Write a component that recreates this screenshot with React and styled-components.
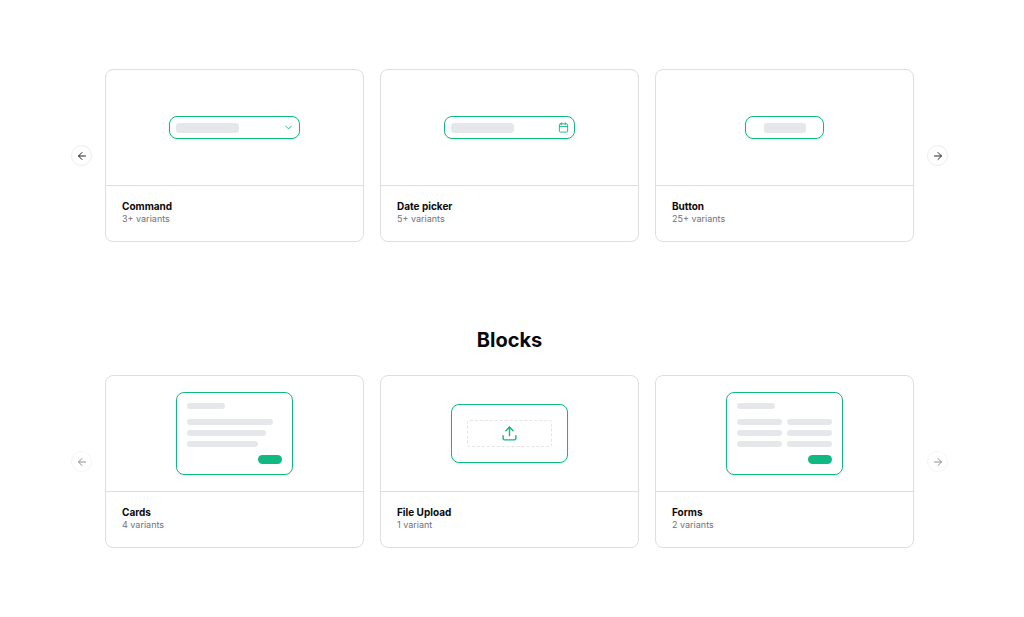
import styled, { createGlobalStyle } from 'styled-components'
import { ArrowLeft, ArrowRight, Calendar, ChevronDown, Upload } from 'lucide-react'

const GlobalStyle = createGlobalStyle`
    * {
        box-sizing: border-box;
    }
    body {
        margin: 0;
        background-color: #fff;
        color: #09090b;
        font-family: Inter, "Liberation Sans", sans-serif;
    }
    h2, h3, p {
        margin: 0;
    }
  `

const Page = styled.main`
    display: flex;
    flex-direction: column;
    gap: 84px;
    padding: 69px 76px 69px 71px;
  `
const Section = styled.section`
    display: flex;
    flex-direction: column;
    gap: 21px;
  `
const SectionTitle = styled.h2`
    font-size: 20px;
    line-height: 28px;
    font-weight: 700;
    text-align: center;
  `
const Carousel = styled.div`
    display: flex;
    align-items: center;
    gap: 13px;
  `
const ArrowButton = styled.button`
    display: flex;
    align-items: center;
    justify-content: center;
    flex: none;
    width: 21px;
    height: 21px;
    padding: 0;
    border: 1px solid #ececee;
    border-radius: 50%;
    background-color: #fff;
    color: #27272a;

    &:disabled {
        opacity: 0.5;
    }
  `
const CardList = styled.div`
    display: grid;
    grid-template-columns: repeat(3, 1fr);
    gap: 16px;
    flex: 1;
  `
const CardBox = styled.a`
    display: block;
    border: 1px solid #dedee1;
    border-radius: 8px;
    color: inherit;
    text-decoration: none;
  `
const Preview = styled.div`
    display: flex;
    align-items: center;
    justify-content: center;
    height: 116px;
    border-bottom: 1px solid #dedee1;
  `
const CardInfo = styled.div`
    padding: 14px 16px 16px;
  `
const CardTitle = styled.h3`
    font-size: 10px;
    line-height: 13px;
    font-weight: 700;
  `
const CardCount = styled.p`
    font-size: 9px;
    line-height: 12px;
    color: #71717a;
  `

const Frame = styled.div`
    border: 1px solid #10b981;
    border-radius: 8px;
    color: #10b981;
    box-shadow: 0 1px 2px rgba(0, 0, 0, 0.08);
  `
const Field = styled(Frame)`
    display: flex;
    align-items: center;
    justify-content: space-between;
    width: 131px;
    height: 23px;
    padding: 0 5px 0 6px;
  `
const ButtonFrame = styled(Frame)`
    display: flex;
    align-items: center;
    justify-content: center;
    width: 79px;
    height: 23px;
  `
const Panel = styled(Frame)`
    display: flex;
    flex-direction: column;
    width: 117px;
    height: 83px;
    padding: 10px;
  `
const UploadPanel = styled(Frame)`
    display: flex;
    width: 117px;
    height: 59px;
    padding: 15px;
  `
const DropZone = styled.div`
    display: flex;
    align-items: center;
    justify-content: center;
    flex: 1;
    border: 1px dashed #e4e4e7;
    border-radius: 3px;
  `
const Placeholder = styled.div`
    width: ${({ $width }) => $width}px;
    height: 10px;
    border-radius: 3px;
    background-color: #e5e7eb;
  `
const Lines = styled.div`
    display: grid;
    grid-template-columns: repeat(${({ $columns }) => $columns}, 1fr);
    gap: 5px;
    margin-top: 10px;
  `
const Line = styled.div`
    width: ${({ $width }) => $width || '100%'};
    height: 6px;
    border-radius: 3px;
    background-color: #e5e7eb;
  `
const Pill = styled.div`
    align-self: flex-end;
    width: 24px;
    height: 9px;
    margin-top: auto;
    border-radius: 5px;
    background-color: #10b981;
  `

const CommandPreview = () => (
    <Field>
        <Placeholder $width={63} />
        <ChevronDown size={11} />
    </Field>
)

const DatePreview = () => (
    <Field>
        <Placeholder $width={63} />
        <Calendar size={11} />
    </Field>
)

const ButtonPreview = () => (
    <ButtonFrame>
        <Placeholder $width={42} />
    </ButtonFrame>
)

const CardsPreview = () => (
    <Panel>
        <Line $width="38px" />
        <Lines $columns={1}>
            <Line $width="86px" />
            <Line $width="79px" />
            <Line $width="71px" />
        </Lines>
        <Pill />
    </Panel>
)

const UploadPreview = () => (
    <UploadPanel>
        <DropZone>
            <Upload size={17} />
        </DropZone>
    </UploadPanel>
)

const FormsPreview = () => (
    <Panel>
        <Line $width="38px" />
        <Lines $columns={2}>
            {[0, 1, 2, 3, 4, 5].map((i) => (
                <Line key={i} />
            ))}
        </Lines>
        <Pill />
    </Panel>
)

const components = [
    { title: 'Command', count: '3+ variants', Art: CommandPreview },
    { title: 'Date picker', count: '5+ variants', Art: DatePreview },
    { title: 'Button', count: '25+ variants', Art: ButtonPreview },
]

const blocks = [
    { title: 'Cards', count: '4 variants', Art: CardsPreview },
    { title: 'File Upload', count: '1 variant', Art: UploadPreview },
    { title: 'Forms', count: '2 variants', Art: FormsPreview },
]

const CardCarousel = ({ items, disabled }) => {
    return (
        <Carousel>
            <ArrowButton type="button" aria-label="Previous" disabled={disabled}>
                <ArrowLeft size={12} />
            </ArrowButton>
            <CardList>
                {items.map(({ title, count, Art }) => (
                    <CardBox key={title} href="#">
                        <Preview>
                            <Art />
                        </Preview>
                        <CardInfo>
                            <CardTitle>{title}</CardTitle>
                            <CardCount>{count}</CardCount>
                        </CardInfo>
                    </CardBox>
                ))}
            </CardList>
            <ArrowButton type="button" aria-label="Next" disabled={disabled}>
                <ArrowRight size={12} />
            </ArrowButton>
        </Carousel>
    )
}

const App = () => {
    return (
        <>
            <GlobalStyle />
            <Page>
                <Section>
                    <CardCarousel items={components} />
                </Section>
                <Section>
                    <SectionTitle>Blocks</SectionTitle>
                    <CardCarousel items={blocks} disabled />
                </Section>
            </Page>
        </>
    )
}

export default App
